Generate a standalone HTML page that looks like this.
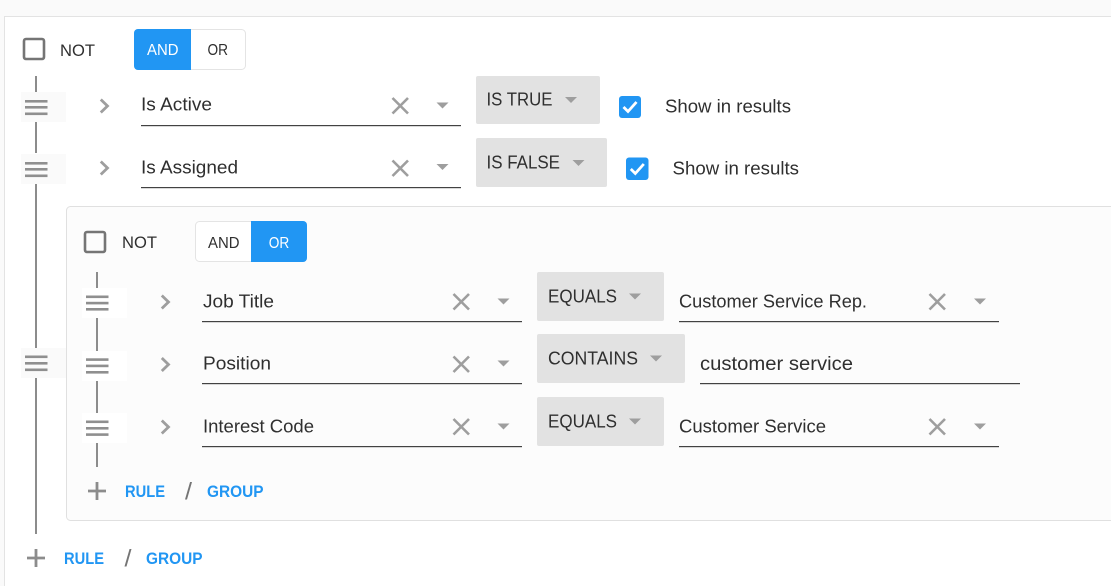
<!DOCTYPE html>
<html><head><meta charset="utf-8"><style>
html,body{margin:0;padding:0;background:#fafafa;width:1111px;height:586px;overflow:hidden}
svg{display:block;position:absolute;left:0;top:0}
text{font-family:"Liberation Sans",Arial,sans-serif;fill:#2f2f2f}
.f{font-size:18px}.s{font-size:15.5px}.l{font-size:16.5px}
.b{font-size:16.5px;font-weight:700;fill:#2196f3}
.sl{font-size:24px;fill:#757575}
.x{stroke:#9e9e9e;stroke-width:2.6;fill:none}
.c{stroke:#9e9e9e;stroke-width:2.8;fill:none}
.t{fill:#9e9e9e}
.v{fill:#8c8c8c}
.h{fill:#8f8f8f}
.u{fill:#424242}
.p{stroke:#8c8c8c;stroke-width:2.8}
.cb{fill:none;stroke:#757575;stroke-width:2.6}
.ck{fill:none;stroke:#fff;stroke-width:2.8}
</style></head><body>
<svg width="1111" height="586" viewBox="0 0 1111 586" xmlns="http://www.w3.org/2000/svg">
<rect x="0" y="0" width="1111" height="586" fill="#fafafa"/>
<rect x="5" y="17" width="1106" height="569" fill="#fff"/>
<rect x="4" y="16" width="1107" height="1" fill="#e3e3e3"/>
<rect x="4" y="16" width="1" height="570" fill="#e3e3e3"/>

<!-- top controls -->
<rect x="24" y="39" width="20" height="20" rx="2" class="cb"/>
<text x="60" y="56" class="l" textLength="35" lengthAdjust="spacingAndGlyphs">NOT</text>
<rect x="134.500" y="29.500" width="111" height="40" rx="4" fill="#fff" stroke="#e4e4e4"/>
<path d="M191 29H138a4 4 0 0 0-4 4V66a4 4 0 0 0 4 4H191Z" fill="#2196f3"/>
<text x="147" y="55" class="s" style="fill:#fff" textLength="31.500" lengthAdjust="spacingAndGlyphs">AND</text>
<text x="207.500" y="55" class="s" textLength="20.500" lengthAdjust="spacingAndGlyphs">OR</text>

<!-- outer connector -->
<rect x="35" y="76" width="2" height="16" class="v"/>
<rect x="35" y="122" width="2" height="31" class="v"/>
<rect x="35" y="184" width="2" height="164" class="v"/>
<rect x="35" y="378" width="2" height="156" class="v"/>

<!-- outer handles -->
<rect x="21" y="92" width="45" height="30" fill="#fafafa"/>
<rect x="25" y="100" width="22.500" height="2.600" class="h"/><rect x="25" y="106" width="22.500" height="2.600" class="h"/><rect x="25" y="112.500" width="22.500" height="2.600" class="h"/>
<rect x="21" y="154" width="45" height="30" fill="#fafafa"/>
<rect x="25" y="162" width="22.500" height="2.600" class="h"/><rect x="25" y="168" width="22.500" height="2.600" class="h"/><rect x="25" y="174.500" width="22.500" height="2.600" class="h"/>
<rect x="21" y="348" width="45" height="30" fill="#fafafa"/>
<rect x="25" y="355.500" width="22.500" height="2.600" class="h"/><rect x="25" y="362" width="22.500" height="2.600" class="h"/><rect x="25" y="368.500" width="22.500" height="2.600" class="h"/>

<!-- rule 1 -->
<path d="M100.800 99.500L107.500 106L100.800 112.500" class="c"/>
<text x="141" y="110.500" class="f" textLength="71" lengthAdjust="spacingAndGlyphs">Is Active</text>
<rect x="141" y="125" width="320" height="1.200" class="u"/>
<path d="M392.500 98L408 113.500M408 98L392.500 113.500" class="x"/>
<path d="M436.500 102.500H448.500L442.500 108.500Z" class="t"/>
<rect x="476" y="76" width="124" height="48" rx="2" fill="#e2e2e2"/>
<text x="486.500" y="105.500" class="f" textLength="66" lengthAdjust="spacingAndGlyphs">IS TRUE</text>
<path d="M565 97H577L571 103Z" class="t"/>
<rect x="619" y="96" width="22" height="22" rx="3" fill="#2196f3"/>
<path d="M623.500 107L628 111.500L636.500 102" class="ck"/>
<text x="665" y="112.500" class="f" textLength="126" lengthAdjust="spacingAndGlyphs">Show in results</text>

<!-- rule 2 -->
<path d="M100.800 161.500L107.500 168L100.800 174.500" class="c"/>
<text x="141" y="173.500" class="f" textLength="97" lengthAdjust="spacingAndGlyphs">Is Assigned</text>
<rect x="141" y="187" width="320" height="1.200" class="u"/>
<path d="M392.500 160.500L408 176M408 160.500L392.500 176" class="x"/>
<path d="M436.500 164H448.500L442.500 170Z" class="t"/>
<rect x="476" y="138" width="131" height="49" rx="2" fill="#e2e2e2"/>
<text x="486.500" y="168.500" class="f" textLength="73.500" lengthAdjust="spacingAndGlyphs">IS FALSE</text>
<path d="M572.500 160H584.500L578.500 166Z" class="t"/>
<rect x="626" y="157.500" width="22.500" height="22.500" rx="3" fill="#2196f3"/>
<path d="M630.800 169L635.300 173.500L643.800 164" class="ck"/>
<text x="672.500" y="174.500" class="f" textLength="126.500" lengthAdjust="spacingAndGlyphs">Show in results</text>

<!-- group -->
<rect x="66.500" y="206.500" width="1060" height="314" rx="4" fill="#fcfcfc" stroke="#e0e0e0"/>
<rect x="85" y="232" width="20" height="20" rx="2" class="cb"/>
<text x="122" y="248" class="l" textLength="35" lengthAdjust="spacingAndGlyphs">NOT</text>
<rect x="195.500" y="221.500" width="111" height="40" rx="4" fill="#fff" stroke="#e4e4e4"/>
<path d="M251 221H303a4 4 0 0 1 4 4V258a4 4 0 0 1-4 4H251Z" fill="#2196f3"/>
<text x="208" y="248" class="s" textLength="31.500" lengthAdjust="spacingAndGlyphs">AND</text>
<text x="268.800" y="248" class="s" style="fill:#fff" textLength="20.500" lengthAdjust="spacingAndGlyphs">OR</text>

<rect x="96" y="272" width="2" height="16" class="v"/>
<rect x="96" y="318" width="2" height="33" class="v"/>
<rect x="96" y="381" width="2" height="32" class="v"/>
<rect x="96" y="443" width="2" height="24" class="v"/>

<rect x="82" y="288" width="45" height="30" fill="#fff"/>
<rect x="86" y="295.500" width="22.500" height="2.600" class="h"/><rect x="86" y="301.800" width="22.500" height="2.600" class="h"/><rect x="86" y="308" width="22.500" height="2.600" class="h"/>
<rect x="82" y="351" width="45" height="30" fill="#fff"/>
<rect x="86" y="358.300" width="22.500" height="2.600" class="h"/><rect x="86" y="364.600" width="22.500" height="2.600" class="h"/><rect x="86" y="371" width="22.500" height="2.600" class="h"/>
<rect x="82" y="413" width="45" height="30" fill="#fff"/>
<rect x="86" y="420.500" width="22.500" height="2.600" class="h"/><rect x="86" y="427" width="22.500" height="2.600" class="h"/><rect x="86" y="433.300" width="22.500" height="2.600" class="h"/>

<!-- group row 1 -->
<path d="M161.800 295.500L168.500 302L161.800 308.500" class="c"/>
<text x="203" y="307.500" class="f" textLength="71" lengthAdjust="spacingAndGlyphs">Job Title</text>
<rect x="202" y="321" width="320" height="1.200" class="u"/>
<path d="M453.500 294L469 309.500M469 294L453.500 309.500" class="x"/>
<path d="M497.500 298.500H509.500L503.500 304.500Z" class="t"/>
<rect x="537" y="272" width="127" height="49" rx="2" fill="#e2e2e2"/>
<text x="548" y="302.500" class="f" textLength="69" lengthAdjust="spacingAndGlyphs">EQUALS</text>
<path d="M629 293.500H641L635 299.500Z" class="t"/>
<text x="679" y="307.500" class="f" textLength="188" lengthAdjust="spacingAndGlyphs">Customer Service Rep.</text>
<rect x="679" y="321" width="320" height="1.200" class="u"/>
<path d="M929.500 294L945 309.500M945 294L929.500 309.500" class="x"/>
<path d="M974 298.500H986L980 304.500Z" class="t"/>

<!-- group row 2 -->
<path d="M161.800 358L168.500 364.500L161.800 371" class="c"/>
<text x="203" y="369.500" class="f" textLength="68" lengthAdjust="spacingAndGlyphs">Position</text>
<rect x="202" y="383" width="320" height="1.200" class="u"/>
<path d="M453.500 356.500L469 372M469 356.500L453.500 372" class="x"/>
<path d="M497.500 360.500H509.500L503.500 366.500Z" class="t"/>
<rect x="537" y="334" width="148" height="49" rx="2" fill="#e2e2e2"/>
<text x="548" y="364.500" class="f" textLength="90" lengthAdjust="spacingAndGlyphs">CONTAINS</text>
<path d="M650 355.500H662L656 361.500Z" class="t"/>
<text x="700" y="370" class="f" style="font-size:19px" textLength="153" lengthAdjust="spacingAndGlyphs">customer service</text>
<rect x="700" y="383" width="320" height="1.200" class="u"/>

<!-- group row 3 -->
<path d="M161.800 420.500L168.500 427L161.800 433.500" class="c"/>
<text x="203" y="432.500" class="f" textLength="111" lengthAdjust="spacingAndGlyphs">Interest Code</text>
<rect x="202" y="446" width="320" height="1.200" class="u"/>
<path d="M453.500 419L469 434.500M469 419L453.500 434.500" class="x"/>
<path d="M497.500 423.500H509.500L503.500 429.500Z" class="t"/>
<rect x="537" y="397" width="127" height="49" rx="2" fill="#e2e2e2"/>
<text x="548" y="427.500" class="f" textLength="69" lengthAdjust="spacingAndGlyphs">EQUALS</text>
<path d="M629 418.500H641L635 424.500Z" class="t"/>
<text x="679" y="432.500" class="f" textLength="147" lengthAdjust="spacingAndGlyphs">Customer Service</text>
<rect x="679" y="446" width="320" height="1.200" class="u"/>
<path d="M929.500 419L945 434.500M945 419L929.500 434.500" class="x"/>
<path d="M974 423.500H986L980 429.500Z" class="t"/>

<!-- group add -->
<path d="M88 491H106M97 482V500" class="p"/>
<text x="125" y="497" class="b" textLength="40" lengthAdjust="spacingAndGlyphs">RULE</text>
<text x="185" y="499.500" class="sl" textLength="7" lengthAdjust="spacingAndGlyphs">/</text>
<text x="207" y="497" class="b" textLength="56.500" lengthAdjust="spacingAndGlyphs">GROUP</text>

<!-- outer add -->
<path d="M27 558H45M36 549V567" class="p"/>
<text x="64" y="564" class="b" textLength="40" lengthAdjust="spacingAndGlyphs">RULE</text>
<text x="124.500" y="566.500" class="sl" textLength="7" lengthAdjust="spacingAndGlyphs">/</text>
<text x="146" y="564" class="b" textLength="56.500" lengthAdjust="spacingAndGlyphs">GROUP</text>
</svg>
</body></html>
